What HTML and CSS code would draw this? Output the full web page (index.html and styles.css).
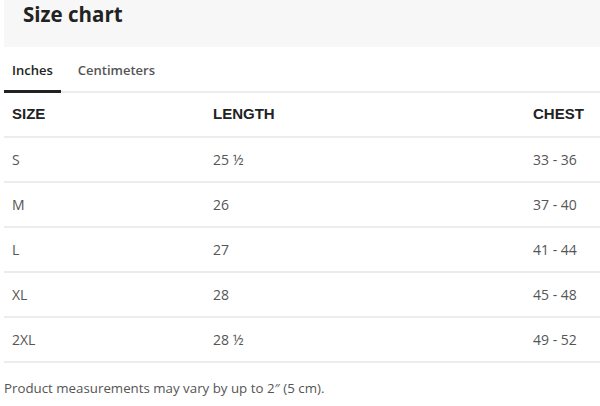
FILE: index.html
```html
<!DOCTYPE html>
<html>
<head>
<meta charset="utf-8">
<link rel="stylesheet" href="styles.css">
</head>
<body>
<div class="page">
  <div class="title-bar"><h1 class="title">Size chart</h1></div>
  <div class="tabs">
    <div class="tab active">Inches</div>
    <div class="tab">Centimeters</div>
  </div>
  <table class="chart">
    <thead>
      <tr><th class="c1">SIZE</th><th class="c2">LENGTH</th><th class="c3">CHEST</th></tr>
    </thead>
    <tbody>
      <tr><td>S</td><td>25 ½</td><td>33 - 36</td></tr>
      <tr><td>M</td><td>26</td><td>37 - 40</td></tr>
      <tr><td>L</td><td>27</td><td>41 - 44</td></tr>
      <tr><td>XL</td><td>28</td><td>45 - 48</td></tr>
      <tr><td>2XL</td><td>28 ½</td><td>49 - 52</td></tr>
    </tbody>
  </table>
  <p class="note">Product measurements may vary by up to 2″ (5 cm).</p>
</div>
</body>
</html>
```
FILE: styles.css
```css
html, body { margin: 0; padding: 0; background: #fff; }
body { font-family: "Open Sans", Lato, sans-serif; color: #333; }
.page { padding-left: 4px; }
.title-bar { background: #f7f7f7; height: 47px; padding-left: 19px; box-sizing: border-box; }
.title { margin: 0; font-size: 20.5px; font-weight: 700; color: #222; line-height: 29px; }
.tabs { display: flex; border-bottom: 2px solid #ececec; margin-top: 11px; height: 33px; box-sizing: content-box; }
.tab { font-size: 13px; font-weight: 600; color: #555; padding: 2px 8px 0; line-height: 20px; margin-right: 9px; }
.tab.active { color: #222; border-bottom: 3px solid #222; margin-bottom: -2px; }
.chart { width: 596px; border-collapse: collapse; }
.chart th, .chart td { text-align: left; padding: 0 8px; border-bottom: 2px solid #ececec; height: 43px; }
.chart th { font-family: "Liberation Sans", Arial, sans-serif; font-weight: 700; font-size: 15px; color: #222; padding-bottom: 3px; height: 40px; }
.chart td { font-size: 14px; color: #555; }
.c1 { width: 185px; }
.c2 { width: 304px; }
.note { margin: 16px 0 0; font-size: 13.3px; color: #555; }
```
